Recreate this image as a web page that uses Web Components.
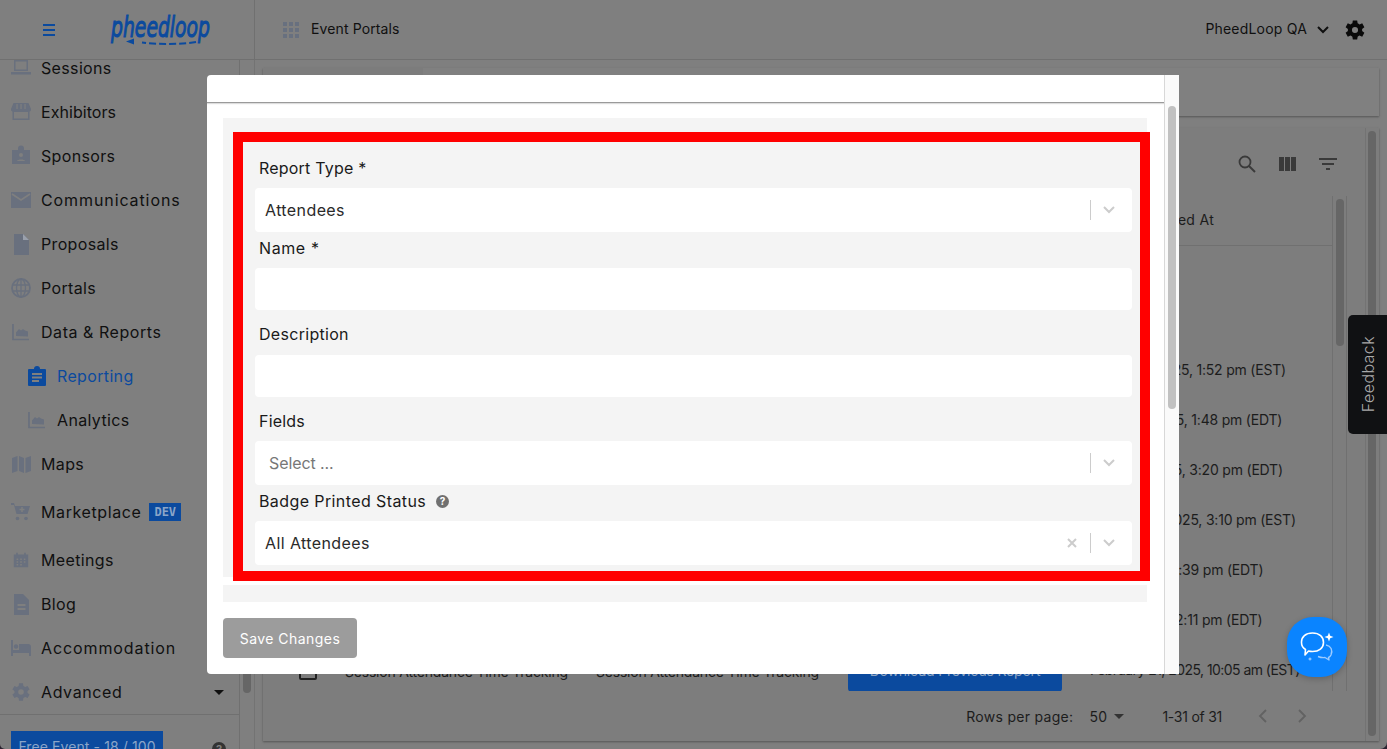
<!DOCTYPE html>
<html lang="en">
<head>
<meta charset="UTF-8">
<title>Reporting</title>
<style>
  html, body { margin: 0; height: 100%; overflow: hidden; background: #2b2230; }
  body { font-family: Inter, "Liberation Sans", sans-serif; }
</style>
</head>
<body>
<app-shell></app-shell>

<script>
  const icons = {
    sessions: '<path d="M4 3h14v11H4z M5.500 4.500v8h11v-8z M1 15h20v2.500H1z" fill-rule="evenodd"/>',
    exhibitors: '<path d="M3.500 2h15l2.500 6a2.500 2.500 0 0 1-1.500 2.700V19h-17v-8.300A2.500 2.500 0 0 1 1 8z M4 11v6.500h14V11z" fill-rule="evenodd"/><path d="M7 3v5M11 3v5M15 3v5" stroke="#7f7f7f" stroke-width="1.200"/>',
    sponsors: '<path d="M2 5h6V3.500a3 3 0 0 1 6 0V5h6v14H2z" /><circle cx="11" cy="10" r="2" fill="#7f7f7f"/><path d="M7 16c0-2 8-2 8 0z" fill="#7f7f7f"/>',
    mail: '<path d="M1 3h20v16H1z"/><path d="M2 5l9 6 9-6" fill="none" stroke="#7f7f7f" stroke-width="1.800"/>',
    file: '<path d="M4 1h9l6 6v15H4z"/><path d="M13 1v6h6" fill="#9aa0ab"/>',
    globe: '<circle cx="11" cy="11" r="9" fill="none" stroke="currentColor" stroke-width="1.800"/><path d="M2 8h18M2 14h18M11 2v18" stroke="currentColor" stroke-width="1.300" fill="none"/><ellipse cx="11" cy="11" rx="4.500" ry="9" fill="none" stroke="currentColor" stroke-width="1.300"/>',
    chart: '<path d="M3 3v15.500h16" fill="none" stroke="currentColor" stroke-width="1.700"/><path d="M6 15v-3.500l3-3.500 2 1.500 2-1.500 2 1.500 3 1v5z"/>',
    clipboard: '<path d="M3 4h5a3 3 0 0 1 6 0h5a1 1 0 0 1 1 1v15a1 1 0 0 1-1 1H3a1 1 0 0 1-1-1V5a1 1 0 0 1 1-1z"/><path d="M6 9h10M6 12.500h10M6 16h7" stroke="#7f7f7f" stroke-width="1.800"/>',
    map: '<path d="M2 5l5.500-2v15L2 20z M9 3l5 2v15l-5-2z M15.500 5L21 3v15l-5.500 2z"/>',
    cart: '<path d="M1 2h3l1 3h15l-2.500 8H6.500L4 4H1z"/><path d="M12 6v5M9.500 8.500h5" stroke="#7f7f7f" stroke-width="1.500"/><circle cx="7.500" cy="17.500" r="1.800"/><circle cx="16" cy="17.500" r="1.800"/>',
    calendar: '<g transform="translate(2.200 2.200) scale(.8)"><path d="M2 4h3V2h2v2h8V2h2v2h3v16H2z"/><path d="M5.500 10h2M10 10h2M14.500 10h2M5.500 13.500h2M10 13.500h2M14.500 13.500h2M5.500 17h2M10 17h2" stroke="#7f7f7f" stroke-width="1.800"/></g>',
    blog: '<path d="M4 1h9l6 6v15H4z"/><path d="M7.500 12h8M7.500 16h8" stroke="#7f7f7f" stroke-width="1.800"/>',
    bed: '<path d="M1 3h2v10h6V7h9a3 3 0 0 1 3 3v9h-2v-3H3v3H1z"/><circle cx="6" cy="9.500" r="2.200"/>',
    gear: '<path fill-rule="evenodd" d="M19.100 12a7.400 7.400 0 0 0 0-2l2.100-1.600-2-3.500-2.500 1a7.500 7.500 0 0 0-1.700-1L14.600 2.200h-4l-.4 2.700a7.500 7.500 0 0 0-1.700 1l-2.500-1-2 3.500L6.100 10a7.400 7.400 0 0 0 0 2L4 13.600l2 3.500 2.500-1a7.500 7.500 0 0 0 1.700 1l.4 2.700h4l.4-2.700a7.500 7.500 0 0 0 1.700-1l2.500 1 2-3.500zM12.600 13.800a2.800 2.800 0 1 1 0-5.600 2.800 2.800 0 0 1 0 5.600z" transform="translate(-1.600)"/>'
  }

  class NavItem extends HTMLElement {
    connectedCallback() {
      const icon = icons[this.getAttribute('icon')]
      this.attachShadow({ mode: 'open' }).innerHTML = `
        <style>
          :host {
            display: flex;
            align-items: center;
            height: 44px;
            padding-left: 10px;
            color: #101010;
            font-size: 16px;
            letter-spacing: var(--ls, .35px);
          }
          :host([sub]) { padding-left: 26px; }
          :host([active]) { color: #0b4a9e; }
          svg { width: 22px; height: 22px; flex: none; margin-right: 9px; color: #69707e; fill: currentColor; }
          :host([active]) svg { color: #0b4a9e; }
          span { white-space: nowrap; }
          ::slotted(*) { margin-left: 8px; }
        </style>
        <svg viewBox="0 0 22 22">${icon}</svg>
        <span>${this.getAttribute('label')}</span>
        <slot></slot>
      `
    }
  }

  class SideBar extends HTMLElement {
    connectedCallback() {
      this.attachShadow({ mode: 'open' }).innerHTML = `
        <style>
          :host {
            display: flex;
            flex-direction: column;
            width: 239px;
            border-right: 1px solid #707070;
            overflow: hidden;
          }
          .list { margin-top: -14px; flex: none; }
          .dev {
            background: #0b4a9e;
            color: #8aa5c8;
            font: bold 12px "DejaVu Sans Mono", monospace;
            letter-spacing: 0;
            padding: 1px 5px;
            line-height: 16px;
          }
          .caret { margin-left: auto; margin-right: 15px; width: 0; height: 0; border: 5px solid transparent; border-top-color: #101010; border-bottom: 0; }
          .foot {
            flex: 1;
            border-top: 1px solid #707070;
            padding: 16px 11px 0;
            display: flex;
            justify-content: space-between;
            align-items: flex-start;
          }
          .free {
            background: #0b4a9e;
            color: #8aa5c8;
            font-size: 14px;
            letter-spacing: .1px;
            height: 32px;
            width: 152px;
            line-height: 32px;
            text-align: center;
            flex: none;
          }
          .help { width: 14px; height: 14px; border-radius: 50%; background: #333; color: #7f7f7f; font-size: 11px; font-weight: 700; line-height: 14px; text-align: center; margin: 11px 2px 0 0; }
        </style>
        <div class="list">
          <nav-item icon="sessions" label="Sessions"></nav-item>
          <nav-item icon="exhibitors" label="Exhibitors" style="--ls:.05px"></nav-item>
          <nav-item icon="sponsors" label="Sponsors"></nav-item>
          <nav-item icon="mail" label="Communications" style="--ls:.9px"></nav-item>
          <nav-item icon="file" label="Proposals"></nav-item>
          <nav-item icon="globe" label="Portals"></nav-item>
          <nav-item icon="chart" label="Data &amp; Reports" style="--ls:.55px"></nav-item>
          <nav-item icon="clipboard" label="Reporting" sub active></nav-item>
          <nav-item icon="chart" label="Analytics" sub></nav-item>
          <nav-item icon="map" label="Maps"></nav-item>
          <nav-item icon="cart" label="Marketplace" style="height:52px;--ls:.6px"><span class="dev">DEV</span></nav-item>
          <nav-item icon="calendar" label="Meetings"></nav-item>
          <nav-item icon="blog" label="Blog"></nav-item>
          <nav-item icon="bed" label="Accommodation" style="--ls:.9px"></nav-item>
          <nav-item icon="gear" label="Advanced" style="--ls:.6px"><span class="caret"></span></nav-item>
        </div>
        <div class="foot">
          <div class="free">Free Event - 18 / 100</div>
          <div class="help">?</div>
        </div>
      `
    }
  }

  class TopBar extends HTMLElement {
    connectedCallback() {
      this.attachShadow({ mode: 'open' }).innerHTML = `
        <style>
          :host {
            display: flex;
            align-items: center;
            height: 60px;
            box-sizing: border-box;
            flex: none;
            border-bottom: 1px solid #707070;
            color: #101010;
            font-size: 14px;
          }
          .brand { width: 255px; border-right: 1px solid #707070; height: 100%; display: flex; align-items: center; box-sizing: border-box; padding-left: 43px; flex: none; }
          .burger { width: 12px; height: 12px; box-sizing: border-box; border-top: 2px solid #0b4a9e; border-bottom: 2px solid #0b4a9e; position: relative; flex: none; }
          .burger::after { content: ""; position: absolute; left: 0; right: 0; top: 3px; height: 2px; background: #0b4a9e; }
          .logo { margin-left: 56px; margin-top: 1px; flex: none; overflow: visible; }
          .logo text { font: italic 400 29px "DejaVu Sans", sans-serif; fill: #0b4a9e; stroke: #0b4a9e; stroke-width: 1.100px; }
          .grid { display: grid; grid-template-columns: repeat(3, 4px); gap: 2px; margin: 0 12px 0 28px; }
          .grid i { width: 4px; height: 4px; background: #68707f; }
          .title { letter-spacing: .12px; margin-top: -2px; }
          .account { margin-left: auto; letter-spacing: .2px; margin-top: -2px; }
          .chev { margin: 0 14px 0 10px; }
          .cog { margin-right: 20px; fill: #0a0a0a; }
        </style>
        <div class="brand">
          <div class="burger"></div>
          <svg class="logo" width="100" height="36" viewBox="0 0 100 36">
            <text x="0" y="25" textLength="99" lengthAdjust="spacingAndGlyphs">pheedloop</text>
            <path d="M85 30c-16 2.500-36 2.500-54 .5" fill="none" stroke="#0b4a9e" stroke-width="2" stroke-dasharray="7 3"/>
            <path d="M15 29.500l8-3v6z" fill="#0b4a9e"/>
          </svg>
        </div>
        <div class="grid"><i></i><i></i><i></i><i></i><i></i><i></i><i></i><i></i><i></i></div>
        <div class="title">Event Portals</div>
        <div class="account">PheedLoop QA</div>
        <svg class="chev" width="12" height="8" viewBox="0 0 12 8"><path d="M1 1l5 5 5-5" fill="none" stroke="#101010" stroke-width="2"/></svg>
        <svg class="cog" width="24" height="24" viewBox="0 0 22 22">${icons.gear}</svg>
      `
    }
  }

  class ReportTable extends HTMLElement {
    connectedCallback() {
      // second value nudges the cell so the part left of the modal's edge lines up
      const dates = [
        ['', 0], ['', 0],
        ['January 3, 2025, 1:52 pm (EST)', -6],
        ['March 4, 2025, 1:48 pm (EDT)', 0],
        ['March 4, 2025, 3:20 pm (EDT)', -2],
        ['February 8, 2025, 3:10 pm (EST)', -2],
        ['May 9, 2025, 3:39 pm (EDT)', -8],
        ['May 2, 2025, 2:11 pm (EDT)', -3]
      ]
      this.attachShadow({ mode: 'open' }).innerHTML = `
        <style>
          :host {
            display: flex;
            flex-direction: column;
            flex: 1;
            min-width: 0;
            padding: 8px;
            gap: 12px;
            color: #1c1c1c;
            font-size: 14px;
          }
          .crumb { height: 48px; background: linear-gradient(90deg, #7c7c7c 160px, #808080 160px); box-shadow: 0 1px 2px #555; flex: none; }
          .card { flex: 1; background: #7d7d7d; box-shadow: 0 1px 2px #555; display: flex; min-height: 0; }
          .body { width: 1084px; flex: none; display: flex; flex-direction: column; }
          .tools { height: 68px; flex: none; display: flex; justify-content: flex-end; align-items: center; gap: 20px; padding: 4px 9px 0 0; box-sizing: border-box; }
          .tools svg { fill: #3a3a3a; }
          .table { height: 495px; flex: none; display: flex; }
          .rows { flex: 1; min-width: 0; overflow: hidden; border-right: 1px solid #707070; }
          .track { width: 13px; flex: none; border-right: 1px solid #707070; }
          .track i { display: block; width: 8px; height: 147px; margin: 3px 0 0 3px; border-radius: 4px; background: #666; }
          .row { display: grid; grid-template-columns: 82px 251px 252px 242px 1fr; align-items: center; height: 50px; white-space: nowrap; letter-spacing: -.2px; }
          .row.head { border-bottom: 1px solid #707070; box-sizing: border-box; padding-bottom: 2px; letter-spacing: .3px; }
          .row.head div, .row .date { grid-column: 5; }
          .row .date { margin-top: -3px; }
          .row .last { letter-spacing: -.55px; }
          .check { width: 18px; height: 18px; box-sizing: border-box; border: 2px solid #222; border-radius: 2px; margin-left: 36px; }
          .dl { width: 214px; height: 42px; background: #0b4a9e; border-radius: 4px; color: #8fa6c4; text-align: center; line-height: 42px; }
          .pager { height: 50px; flex: none; display: flex; align-items: center; justify-content: flex-end; padding-right: 40px; letter-spacing: .3px; }
          .pager svg { flex: none; }
          .rail { margin-left: 18px; flex: 1; border-left: 1px solid #737373; }
          .rail i { display: block; width: 8px; height: 605px; margin: 3px 0 0 2px; border-radius: 4px; background: #666; }
        </style>
        <div class="crumb"></div>
        <div class="card">
          <div class="body">
            <div class="tools">
              <svg style="margin-right:1px" width="20" height="20" viewBox="0 0 20 20"><circle cx="8" cy="8" r="5.500" fill="none" stroke="#3a3a3a" stroke-width="1.800"/><path d="M12 12l6 6" stroke="#3a3a3a" stroke-width="2"/></svg>
              <svg width="20" height="16" viewBox="0 0 20 16"><path d="M1 1h5v14H1zM7 1h5v14H7zM13 1h5v14h-5z"/></svg>
              <svg width="20" height="14" viewBox="0 0 20 14"><path d="M1 1h18v2H1zM4 6h12v2H4zM8 11h4v2H8z"/></svg>
            </div>
            <div class="table">
              <div class="rows">
                <div class="row head"><div>Last Generated At</div></div>
                ${dates.map(d => `<div class="row"><div class="date" style="margin-left:${d[1]}px">${d[0]}</div></div>`).join('')}
                <div class="row">
                  <div class="check"></div>
                  <div>Session Attendance Time Tracking</div>
                  <div>Session Attendance Time Tracking</div>
                  <div class="dl">Download Previous Report</div>
                  <div class="date last">February 21, 2025, 10:05 am (EST)</div>
                </div>
              </div>
              <div class="track"><i></i></div>
            </div>
            <div class="pager">
              <span>Rows per page:</span>
              <span style="margin-left:16px">50</span>
              <svg style="margin:0 38px 0 7px" width="10" height="5" viewBox="0 0 10 5"><path d="M0 0h10L5 5z" fill="#333"/></svg>
              <span style="letter-spacing:-.25px">1-31 of 31</span>
              <svg style="margin-left:36px" width="10" height="14" viewBox="0 0 10 14"><path d="M8 1L2 7l6 6" fill="none" stroke="#626262" stroke-width="1.800"/></svg>
              <svg style="margin-left:29px" width="10" height="14" viewBox="0 0 10 14"><path d="M2 1l6 6-6 6" fill="none" stroke="#626262" stroke-width="1.800"/></svg>
            </div>
          </div>
          <div class="rail"><i></i></div>
        </div>
      `
    }
  }

  class FormField extends HTMLElement {
    connectedCallback() {
      const kind = this.getAttribute('kind')
      const value = this.getAttribute('value') || ''
      const placeholder = this.getAttribute('placeholder')
      const h = kind === 'input' ? 42 : 44
      this.attachShadow({ mode: 'open' }).innerHTML = `
        <style>
          :host { display: block; color: #1a1a1a; font-size: 16px; }
          .label { display: flex; align-items: center; box-sizing: border-box; padding: var(--label-pad, 0) 0 var(--label-pad-b, 0) 4px; letter-spacing: var(--label-ls, .2px); height: var(--label-h, 46px); gap: 10px; }
          .control {
            height: ${h}px;
            background: #fff;
            border-radius: 4px;
            display: flex;
            align-items: center;
            padding-left: ${placeholder ? 14 : 10}px;
            letter-spacing: ${placeholder ? '-.1px' : '.4px'};
            color: ${placeholder ? '#777' : '#2a2a2a'};
          }
          .grow { flex: 1; }
          .x { margin-right: 13px; }
          .sep { width: 1px; height: 20px; background: #ccc; }
          .chev { margin: 0 17px 0 12px; }
          .help { width: 13px; height: 13px; border-radius: 50%; background: #707070; color: #fff; font-size: 10px; font-weight: 700; line-height: 13px; text-align: center; letter-spacing: 0; }
        </style>
        <div class="label"><span>${this.getAttribute('label')}</span>${this.hasAttribute('help') ? '<span class="help">?</span>' : ''}</div>
        <div class="control">
          <span class="grow">${placeholder || value}</span>
          ${this.hasAttribute('clear') ? '<svg class="x" width="10" height="10" viewBox="0 0 10 10"><path d="M1 1l8 8M9 1L1 9" stroke="#ccc" stroke-width="2"/></svg>' : ''}
          ${kind === 'select' ? '<span class="sep"></span><svg class="chev" width="12" height="8" viewBox="0 0 12 8"><path d="M1 1l5 5 5-5" fill="none" stroke="#ccc" stroke-width="2"/></svg>' : ''}
        </div>
      `
    }
  }

  class ReportModal extends HTMLElement {
    connectedCallback() {
      this.attachShadow({ mode: 'open' }).innerHTML = `
        <style>
          :host {
            position: absolute;
            left: 207px;
            top: 75px;
            width: 972px;
            height: 599px;
            background: #fff;
            border-radius: 4px 0 0 4px;
            display: flex;
            overflow: hidden;
          }
          .main { flex: 1; min-width: 0; display: flex; flex-direction: column; }
          .head { height: 27px; flex: none; border-bottom: 1px solid #9a9a9a; box-shadow: 0 1px 1px #ddd; }
          .section { background: #f4f4f4; margin: 15px 17px 0 16px; height: 459px; flex: none; position: relative; }
          .strip { background: #f4f4f4; margin: 8px 17px 0 16px; height: 17px; flex: none; }
          /* red annotation drawn over the form in the reference */
          .mark {
            position: absolute;
            left: 10px;
            top: 14px;
            width: 917px;
            height: 449px;
            box-sizing: border-box;
            border: 10px solid #f00;
            padding: 0 8px 0 12px;
            background: #f4f4f4;
          }
          .save {
            margin: 16px 0 0 16px;
            width: 134px;
            height: 40px;
            border: 0;
            border-radius: 4px;
            background: #9c9c9c;
            color: #fff;
            font: 14px Inter, "Liberation Sans", sans-serif;
            letter-spacing: .45px;
            flex: none;
          }
          .rail { width: 15px; box-sizing: border-box; flex: none; background: #fafafa; border-left: 1px solid #d8d8d8; position: relative; }
          .rail i { position: absolute; left: 3px; top: 31px; width: 8px; height: 303px; border-radius: 4px; background: #c1c1c1; }
        </style>
        <div class="main">
          <div class="head"></div>
          <div class="section">
            <div class="mark">
              <form-field style="--label-h:46px;--label-pad:6px" label="Report Type *" kind="select" value="Attendees"></form-field>
              <form-field style="--label-h:36px;--label-pad-b:4px;--label-ls:.6px" label="Name *" kind="input"></form-field>
              <form-field style="--label-h:45px;--label-pad:2px;--label-ls:.3px" label="Description" kind="input"></form-field>
              <form-field style="--label-h:44px;--label-pad:3px" label="Fields" kind="select" placeholder="Select ..."></form-field>
              <form-field style="--label-h:36px;--label-pad-b:4px;--label-ls:.4px" label="Badge Printed Status" help kind="select" clear value="All Attendees"></form-field>
            </div>
          </div>
          <div class="strip"></div>
          <button class="save">Save Changes</button>
        </div>
        <div class="rail"><i></i></div>
      `
    }
  }

  class FeedbackTab extends HTMLElement {
    connectedCallback() {
      this.attachShadow({ mode: 'open' }).innerHTML = `
        <style>
          :host {
            position: absolute;
            right: 0;
            top: 315px;
            width: 39px;
            height: 119px;
            background: #101113;
            border-radius: 5px 0 0 5px;
            color: #a8a8a8;
            font-size: 16px;
            font-weight: 300;
            display: flex;
            align-items: center;
            justify-content: center;
          }
          span { writing-mode: vertical-rl; transform: rotate(180deg); letter-spacing: .4px; }
        </style>
        <span>Feedback</span>
      `
    }
  }

  class ChatButton extends HTMLElement {
    connectedCallback() {
      this.attachShadow({ mode: 'open' }).innerHTML = `
        <style>
          :host {
            position: absolute;
            left: 1287px;
            top: 617px;
            width: 60px;
            height: 60px;
            background: #0a84ff;
            border-radius: 26px;
            display: block;
            box-shadow: 0 2px 6px rgba(0, 0, 0, .2);
          }
          svg { display: block; }
        </style>
        <svg width="60" height="60" viewBox="0 0 60 60" fill="none">
          <path d="M14.500 25c0-5 4-9 11-9s11 4 11 9.500-4.500 9-11 9c-1.500 0-3-.2-4-.5l-3.500 4 .5-5.500c-2.500-1.500-4-4-4-7z" stroke="#fff" stroke-width="1.600" stroke-linejoin="round"/>
          <path d="M39 28c5 1 7 5 5 10-.5 1-1.500 2-2.500 2.500l.5 2.500-4-2.500c-3 .5-5-.2-7-1" stroke="#9ccbff" stroke-width="1.400" stroke-linejoin="round"/>
          <path d="M42 15.500l1.200 3.300 3.300 1.200-3.300 1.200-1.200 3.300-1.200-3.300-3.300-1.200 3.300-1.200z" fill="#fff"/>
          <path d="M23 40l.7 1.300 1.300.7-1.300.7-.7 1.300-.7-1.300-1.300-.7 1.300-.7z" fill="#9ccbff"/>
        </svg>
      `
    }
  }

  class AppShell extends HTMLElement {
    connectedCallback() {
      this.attachShadow({ mode: 'open' }).innerHTML = `
        <style>
          :host { display: flex; flex-direction: column; height: 749px; width: 1387px; position: relative; overflow: hidden; background: #7f7f7f; border-radius: 0 0 7px 5px; }
          .row { flex: 1; display: flex; min-height: 0; }
          .gutter { width: 14px; flex: none; border-right: 1px solid #737373; }
          .gutter i { display: block; width: 8px; height: 233px; margin: 400px 0 0 3px; border-radius: 4px; background: #666; }
        </style>
        <top-bar></top-bar>
        <div class="row">
          <side-bar></side-bar>
          <div class="gutter"><i></i></div>
          <report-table></report-table>
        </div>
        <report-modal></report-modal>
        <feedback-tab></feedback-tab>
        <chat-button></chat-button>
      `
    }
  }

  customElements.define('nav-item', NavItem)
  customElements.define('side-bar', SideBar)
  customElements.define('top-bar', TopBar)
  customElements.define('report-table', ReportTable)
  customElements.define('form-field', FormField)
  customElements.define('report-modal', ReportModal)
  customElements.define('feedback-tab', FeedbackTab)
  customElements.define('chat-button', ChatButton)
  customElements.define('app-shell', AppShell)
</script>
</body>
</html>
